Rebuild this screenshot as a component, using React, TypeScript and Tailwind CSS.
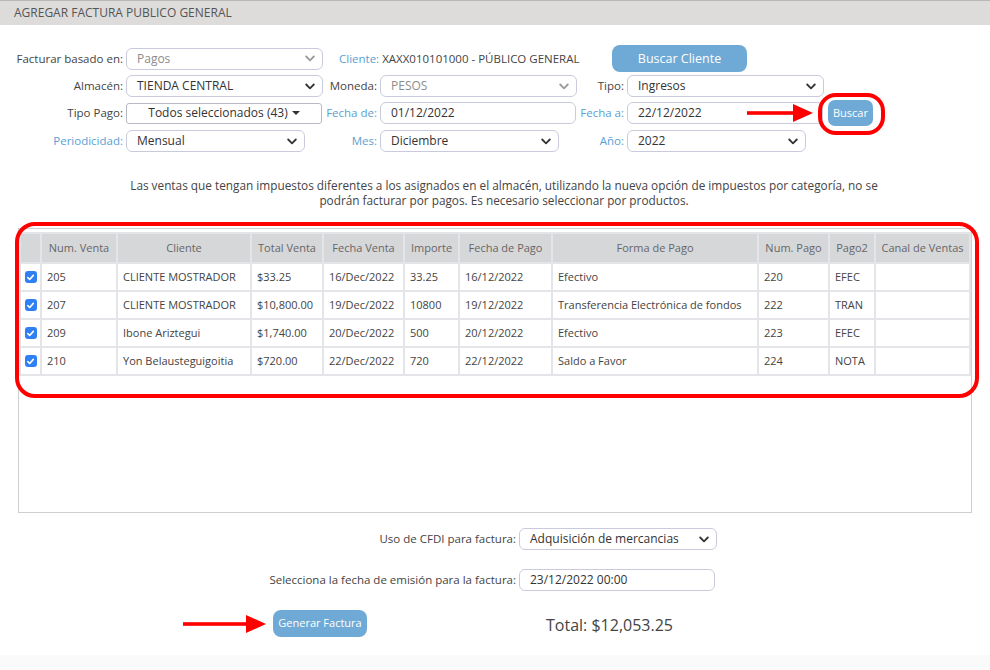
import React from 'react';

type Venta = {
  num: string;
  cliente: string;
  total: string;
  fecha: string;
  importe: string;
  fechaPago: string;
  forma: string;
  numPago: string;
  pago2: string;
};

const ventas: Venta[] = [
  { num: '205', cliente: 'CLIENTE MOSTRADOR', total: '$33.25', fecha: '16/Dec/2022', importe: '33.25', fechaPago: '16/12/2022', forma: 'Efectivo', numPago: '220', pago2: 'EFEC' },
  { num: '207', cliente: 'CLIENTE MOSTRADOR', total: '$10,800.00', fecha: '19/Dec/2022', importe: '10800', fechaPago: '19/12/2022', forma: 'Transferencia Electrónica de fondos', numPago: '222', pago2: 'TRAN' },
  { num: '209', cliente: 'Ibone Ariztegui', total: '$1,740.00', fecha: '20/Dec/2022', importe: '500', fechaPago: '20/12/2022', forma: 'Efectivo', numPago: '223', pago2: 'EFEC' },
  { num: '210', cliente: 'Yon Belausteguigoitia', total: '$720.00', fecha: '22/Dec/2022', importe: '720', fechaPago: '22/12/2022', forma: 'Saldo a Favor', numPago: '224', pago2: 'NOTA' },
];

const headers = ['', 'Num. Venta', 'Cliente', 'Total Venta', 'Fecha Venta', 'Importe', 'Fecha de Pago', 'Forma de Pago', 'Num. Pago', 'Pago2', 'Canal de Ventas'];
const colWidths = [19, 74, 132, 70, 79, 53, 91, 204, 69, 44, 93];

function Chevron({ muted }: { muted?: boolean }) {
  return (
    <svg width="10" height="7" viewBox="0 0 10 7" className="shrink-0">
      <path d="M1.2 1.5 L5 5.3 L8.8 1.5" fill="none" stroke={muted ? '#9b9b9b' : '#333'} strokeWidth="1.8" strokeLinecap="round" strokeLinejoin="round" />
    </svg>
  );
}

function Select({ value, width, muted }: { value: string; width: string; muted?: boolean }) {
  return (
    <div className={`${width} h-[22px] flex items-center justify-between pl-[10px] pr-[7px] border border-[#c9cbdc] rounded-[6px] bg-white text-[12px] ${muted ? 'text-[#8c8c8c]' : 'text-[#333]'}`}>
      <span>{value}</span>
      <Chevron muted={muted} />
    </div>
  );
}

function Input({ value, width }: { value: string; width: string }) {
  return (
    <div className={`${width} h-[22px] flex items-center pl-[10px] border border-[#c9cbdc] rounded-[6px] bg-white text-[12px] text-[#333]`}>
      {value}
    </div>
  );
}

function Label({ text, width, blue }: { text: string; width: string; blue?: boolean }) {
  return (
    <span className={`${width} shrink-0 text-right pr-[3px] text-[11.5px] ${blue ? 'text-[#5a9fd4]' : 'text-[#444]'}`}>
      {text}
    </span>
  );
}

function Check() {
  return (
    <div className="w-[12px] h-[12px] rounded-[3px] bg-[#2f7ff5] flex items-center justify-center mx-auto">
      <svg width="9" height="9" viewBox="0 0 9 9">
        <path d="M1.8 4.6 L3.7 6.5 L7.3 2.4" fill="none" stroke="#fff" strokeWidth="1.6" strokeLinecap="round" strokeLinejoin="round" />
      </svg>
    </div>
  );
}

function Arrow({ className, length }: { className: string; length: number }) {
  return (
    <svg width={length} height="20" viewBox={`0 0 ${length} 20`} className={className}>
      <rect x="0" y="8.2" width={length - 18} height="3.6" fill="#f00" />
      <polygon points={`${length - 20},1 ${length},10 ${length - 20},19`} fill="#f00" />
    </svg>
  );
}

export default function App() {
  return (
    <div className="relative w-[990px] h-[670px] bg-[#fafafa] font-['Open_Sans',sans-serif] overflow-hidden">
      <div className="bg-white pb-[18px]">
        {/* Title bar */}
        <div className="h-[25px] bg-[#dddcdb] border-t border-[#b8b8b8] flex items-center pl-[14px] text-[12px] text-[#555]">
          AGREGAR FACTURA PUBLICO GENERAL
        </div>

        {/* Filters */}
        <div className="pt-[20px]">
          <div className="flex items-center h-[27px]">
            <Label text="Facturar basado en:" width="w-[126px]" />
            <Select value="Pagos" width="w-[197px]" muted />
            <span className="w-[289px] pl-[16px] text-[11.5px] text-[#444]">
              <span className="text-[#5a9fd4]">Cliente:</span> XAXX010101000 - PÚBLICO GENERAL
            </span>
            <button className="w-[135px] h-[27px] rounded-[8px] bg-[#6eaad5] text-white text-[12.5px] pt-[2px]">Buscar Cliente</button>
          </div>

          <div className="flex items-center h-[22px] mt-[3px]">
            <Label text="Almacén:" width="w-[126px]" />
            <Select value="TIENDA CENTRAL" width="w-[197px]" />
            <Label text="Moneda:" width="w-[57px]" />
            <Select value="PESOS" width="w-[197px]" muted />
            <Label text="Tipo:" width="w-[50px]" />
            <Select value="Ingresos" width="w-[197px]" />
          </div>

          <div className="flex items-center h-[26px] mt-[3px]">
            <Label text="Tipo Pago:" width="w-[126px]" />
            <div className="w-[196px] h-[21px] flex items-center justify-center border border-[#b9b9c4] rounded-[3px] text-[12px] text-[#333]">
              Todos seleccionados (43)
              <span className="ml-[4px] border-x-[4px] border-x-transparent border-t-[4px] border-t-[#333]" />
            </div>
            <Label text="Fecha de:" width="w-[58px]" blue />
            <Input value="01/12/2022" width="w-[196px]" />
            <Label text="Fecha a:" width="w-[51px]" blue />
            <Input value="22/12/2022" width="w-[196px]" />
            <button className="ml-[5px] w-[45px] h-[26px] rounded-[7px] bg-[#6eaad5] text-white text-[11px]">Buscar</button>
          </div>

          <div className="flex items-center h-[22px] mt-[4px]">
            <Label text="Periodicidad:" width="w-[126px]" blue />
            <Select value="Mensual" width="w-[179px]" />
            <Label text="Mes:" width="w-[75px]" blue />
            <Select value="Diciembre" width="w-[179px]" />
            <Label text="Año:" width="w-[68px]" blue />
            <Select value="2022" width="w-[179px]" />
          </div>
        </div>

        {/* Notice */}
        <p className="mt-[26px] pl-[18px] text-center text-[11.8px] leading-[15px] text-[#444]">
          Las ventas que tengan impuestos diferentes a los asignados en el almacén, utilizando la nueva opción de impuestos por categoría, no se
          <br />
          podrán facturar por pagos. Es necesario seleccionar por productos.
        </p>

        {/* Sales table */}
        <div className="mx-[18px] mt-[20px] h-[285px] border border-[#cfcfcf] pt-[3px]">
          <table className="w-full table-fixed border-separate border-spacing-[2px] bg-[#e3e5e8] text-[11px]">
            <colgroup>
              {colWidths.map((w, i) => (
                <col key={i} style={{ width: w }} />
              ))}
            </colgroup>
            <thead>
              <tr>
                {headers.map((h, i) => (
                  <th key={i} className="h-[28px] bg-[#d6d7d9] font-normal text-[#666] text-center whitespace-nowrap overflow-hidden">
                    {h}
                  </th>
                ))}
              </tr>
            </thead>
            <tbody>
              {ventas.map((v) => (
                <tr key={v.num}>
                  <td className="h-[26px] bg-white"><Check /></td>
                  <td className="bg-white pl-[5px] text-[#444]">{v.num}</td>
                  <td className="bg-white pl-[5px] text-[#444] whitespace-nowrap">{v.cliente}</td>
                  <td className="bg-white pl-[5px] text-[#444]">{v.total}</td>
                  <td className="bg-white pl-[5px] text-[#444]">{v.fecha}</td>
                  <td className="bg-white pl-[5px] text-[#444]">{v.importe}</td>
                  <td className="bg-white pl-[5px] text-[#444]">{v.fechaPago}</td>
                  <td className="bg-white pl-[5px] text-[#444] whitespace-nowrap">{v.forma}</td>
                  <td className="bg-white pl-[5px] text-[#444]">{v.numPago}</td>
                  <td className="bg-white pl-[5px] text-[#444]">{v.pago2}</td>
                  <td className="bg-white" />
                </tr>
              ))}
            </tbody>
          </table>
        </div>

        {/* Invoice options */}
        <div className="flex items-center h-[22px] mt-[15px]">
          <Label text="Uso de CFDI para factura:" width="w-[519px]" />
          <Select value="Adquisición de mercancias" width="w-[198px]" />
        </div>
        <div className="flex items-center h-[22px] mt-[19px]">
          <Label text="Selecciona la fecha de emisión para la factura:" width="w-[519px]" />
          <Input value="23/12/2022 00:00" width="w-[196px]" />
        </div>
        <div className="flex items-center h-[27px] mt-[19px]">
          <button className="ml-[273px] w-[94px] h-[27px] rounded-[8px] bg-[#6eaad5] text-white text-[11px]">Generar Factura</button>
          <span className="ml-[179px] mt-[2px] text-[16px] text-[#444]">Total: $12,053.25</span>
        </div>
      </div>

      {/* Annotations */}
      <Arrow className="absolute left-[747px] top-[103px]" length={66} />
      <div className="absolute left-[818px] top-[93px] w-[67px] h-[42px] border-[4px] border-[#f00] rounded-[18px]" />
      <div className="absolute left-[15px] top-[222px] w-[964px] h-[176px] border-[4px] border-[#f00] rounded-[20px]" />
      <Arrow className="absolute left-[183px] top-[614px]" length={83} />
    </div>
  );
}
